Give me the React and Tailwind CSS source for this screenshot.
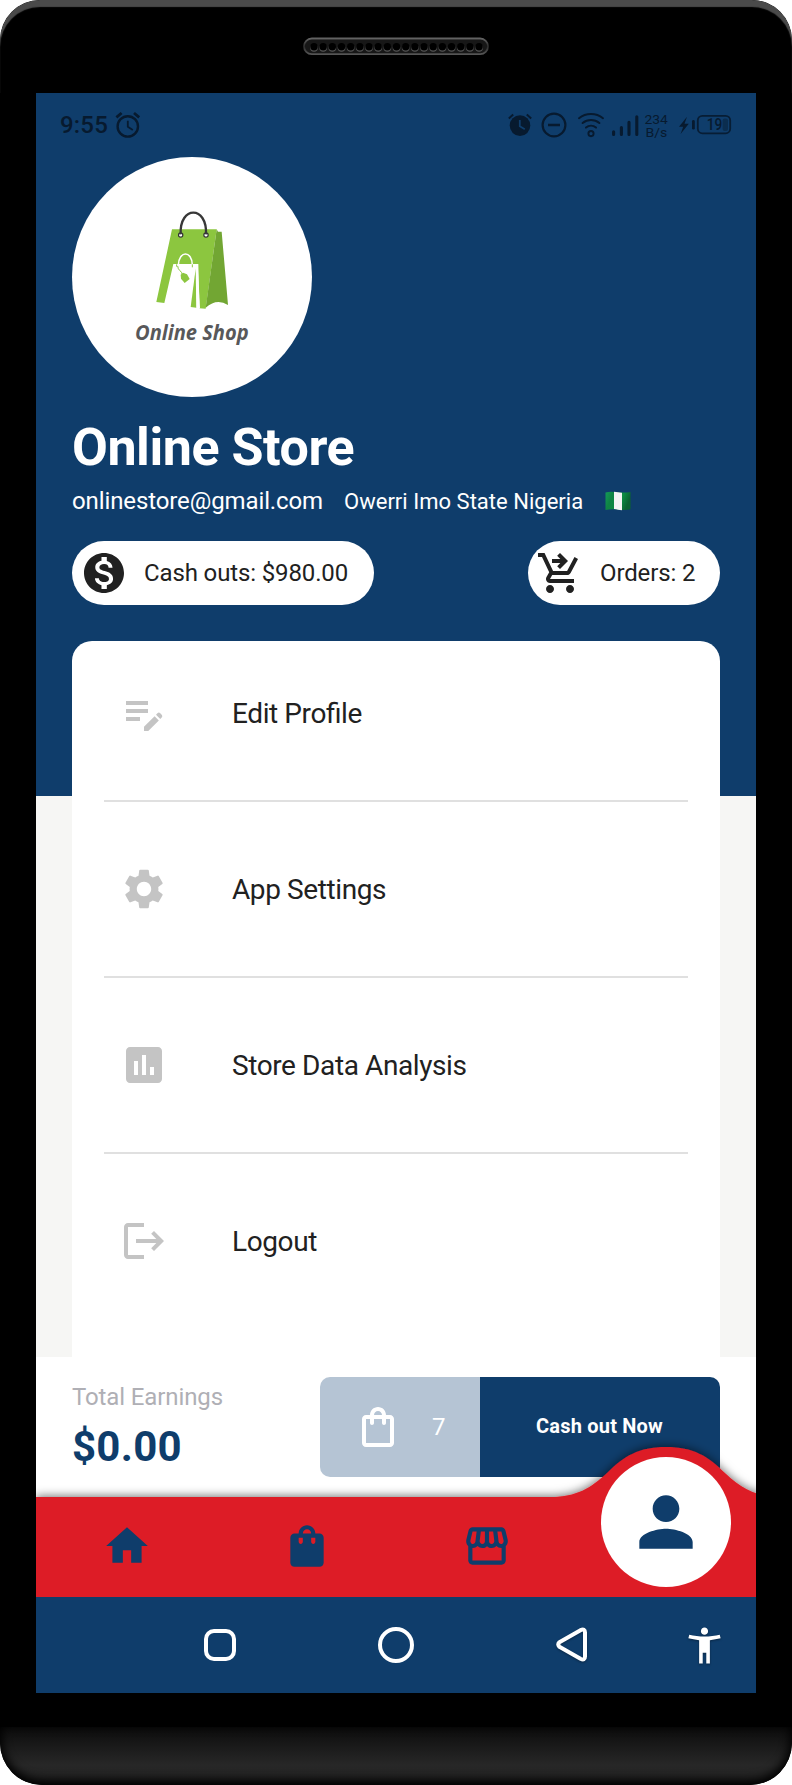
import {
  MdMonetizationOn,
  MdShoppingCartCheckout,
  MdEditNote,
  MdSettings,
  MdAssessment,
  MdOutlineShoppingBag,
  MdShoppingBag,
  MdHome,
  MdOutlineStorefront,
  MdPerson,
  MdAccessibilityNew,
} from "react-icons/md";

function LogoutIcon({ className }) {
  return (
    <svg viewBox="0 0 24 24" fill="currentColor" className={className}>
      <path d="M17 7l-1.41 1.41L18.17 11H8v2h10.17l-2.58 2.58L17 17l5-5M4 5h8V3H4c-1.1 0-2 .9-2 2v14c0 1.1.9 2 2 2h8v-2H4V5z" />
    </svg>
  );
}

function Speaker() {
  return (
    <svg viewBox="0 0 186 18" className="mt-[37px] h-[18px] w-[186px]">
      <defs>
        <linearGradient id="rim" x1="0" y1="0" x2="0" y2="1">
          <stop offset="0" stopColor="#626262" />
          <stop offset="0.5" stopColor="#2c2c2c" />
          <stop offset="1" stopColor="#555" />
        </linearGradient>
      </defs>
      <rect x="1" y="1.5" width="184" height="15.6" rx="7.8" fill="#171717" stroke="url(#rim)" strokeWidth="1.8" />
      {Array.from({ length: 19 }, (_, i) => (
        <g key={i}>
          <circle cx={11 + i * 9.17} cy="10.9" r="3.8" fill="#555" />
          <circle cx={11 + i * 9.17} cy="9.8" r="3.7" fill="#000" />
        </g>
      ))}
    </svg>
  );
}

function StatusBar() {
  return (
    <div className="flex h-16 shrink-0 items-center text-[#071a2f]">
      <span className="ml-6 w-[48px] text-[24px] leading-none font-medium tracking-[0.2px]">9:55</span>
      <svg viewBox="0 0 26 28" className="ml-[7px] h-7 w-[26px]" fill="none" stroke="currentColor" strokeWidth="2.4">
        <circle cx="12.8" cy="15.4" r="10.2" />
        <path d="M12.8 9.8v6l5 3.2" strokeWidth="1.8" />
        <path d="M1.4 6.3L6.6 2M24.2 6.3L19 2" strokeWidth="2.8" />
      </svg>
      <svg viewBox="505 111 230 28" className="ml-[364px] h-7 w-[230px]" fill="none" stroke="currentColor">
        <circle cx="520" cy="125.6" r="10.3" fill="currentColor" stroke="none" />
        <path d="M519.8 120v6.2l5 3" stroke="#0f3d6b" strokeWidth="1.8" />
        <path d="M508.8 118.6l4.4-4M531.2 118.6l-4.4-4" strokeWidth="2" />
        <circle cx="554" cy="125" r="11.4" strokeWidth="2.2" />
        <path d="M548 125h12" strokeWidth="2.4" />
        <g strokeWidth="2" strokeLinecap="round">
          <path d="M579 118.2a19 19 0 0 1 24 0" />
          <path d="M582.6 123a13 13 0 0 1 16.8 0" />
          <path d="M586 127.6a7.8 7.8 0 0 1 10 0" />
        </g>
        <circle cx="591" cy="133.6" r="2.6" strokeWidth="1.9" />
        <g strokeWidth="3.1" strokeLinecap="round">
          <path d="M613.6 131.8v2.7M621.4 127.6v6.9M629 122.2v12.3M636.8 116.8v17.7" />
        </g>
        <path d="M687 116.8l-8 10h4.2l-2.6 7.2 8.2-10.2h-4.3z" fill="currentColor" stroke="none" />
        <path d="M693.4 121.4v6.8" strokeWidth="2.8" strokeLinecap="round" />
        <rect x="697.8" y="115.9" width="32.4" height="17.4" rx="4.6" strokeWidth="1.8" opacity="0.9" />
        <rect x="722.6" y="118.4" width="5.4" height="12.6" rx="2" fill="currentColor" stroke="none" opacity="0.45" />
        <g fill="currentColor" stroke="none" fontFamily="Roboto, sans-serif">
          <text x="644.4" y="124.2" fontSize="13.6" textLength="23.4" lengthAdjust="spacingAndGlyphs">234</text>
          <text x="645.4" y="137.2" fontSize="13.6" textLength="21.8" lengthAdjust="spacingAndGlyphs">B/s</text>
          <text x="706.8" y="130.2" fontSize="16" fontWeight="500" textLength="15.5" lengthAdjust="spacingAndGlyphs">19</text>
        </g>
      </svg>
    </div>
  );
}

function Avatar() {
  return (
    <svg viewBox="36 21 720 720" className="ml-9 size-60 shrink-0">
      <circle cx="396" cy="381" r="360" fill="#fff" />
      <path d="M336 238H470L437 476L418 475L415 342H340L313 459L289 456Z" fill="#8cc63f" />
      <path d="M470 238L474 245H485L504 465Q470 444 437 473Z" fill="#72a633" />
      <path d="M407 356L392 471L409 473Z" fill="#8cc63f" />
      <path d="M413 342L420 475L410 473L408 350Z" fill="#fff" />
      <path d="M355 350V345C357 301 396 301 397 345V350" fill="none" stroke="#fff" strokeWidth="4.5" />
      <path d="M350 343v7M397 343v9" stroke="#8cc63f" strokeWidth="3" />
      <path d="M353 348C353 362 366 362 367 374" fill="none" stroke="#8cc63f" strokeWidth="3" />
      <path d="M362 374L369 368L381 373L389 387L374 399L363 386Z" fill="#8cc63f" />
      <circle cx="362" cy="255" r="6.5" fill="#fff" stroke="#333" strokeWidth="3.5" />
      <circle cx="438" cy="255" r="6.5" fill="#fff" stroke="#333" strokeWidth="3.5" />
      <path d="M362 253C358 166 442 166 438 253" fill="none" stroke="#383838" strokeWidth="7" />
      <text
        x="225"
        y="571"
        fontFamily="'Open Sans', sans-serif"
        fontSize="63"
        fontWeight="700"
        fontStyle="italic"
        fill="#58585a"
        textLength="341"
        lengthAdjust="spacingAndGlyphs"
      >
        Online Shop
      </text>
    </svg>
  );
}

function Flag() {
  return (
    <svg viewBox="0 0 26 20" className="ml-[22px] h-5 w-[26px]">
      <defs>
        <linearGradient id="wave" x1="0" y1="0" x2="1" y2="0.3">
          <stop offset="0" stopColor="#149a58" />
          <stop offset="0.3" stopColor="#0f8444" />
          <stop offset="0.7" stopColor="#0b8c42" />
          <stop offset="1" stopColor="#0a6230" />
        </linearGradient>
      </defs>
      <path d="M0.5 1.5C8 -0.8 15 3 25.5 1V18.3C17 20.4 10 16.8 0.5 19Z" fill="url(#wave)" />
      <path d="M9 0.7C12 0.9 14 1.6 17 1.7V19.3C14 19.1 12 18.2 9 18Z" fill="#f4f4f4" />
    </svg>
  );
}

const menu = [
  { label: "Edit Profile", Icon: MdEditNote },
  { label: "App Settings", Icon: MdSettings },
  { label: "Store Data Analysis", Icon: MdAssessment },
  { label: "Logout", Icon: LogoutIcon },
];

function Profile() {
  return (
    <div className="flex h-[1264px] flex-col overflow-hidden bg-[linear-gradient(#0f3d6b_703px,#f6f6f4_703px)]">
      <StatusBar />
      <Avatar />
      <div className="mt-[21px] h-[60px] pl-9 text-[52px] leading-[60px] font-bold tracking-[-0.45px] whitespace-nowrap text-white">
        Online Store
      </div>
      <div className="mt-[7px] flex h-8 items-center pl-9 whitespace-nowrap text-white">
        <span className="w-[272px] text-[24px] tracking-[-0.11px]">onlinestore@gmail.com</span>
        <span className="text-[22px] tracking-[0.02px]">Owerri Imo State Nigeria</span>
        <Flag />
      </div>
      <div className="mt-6 flex h-16 shrink-0 justify-between px-9 text-[24px] tracking-[-0.13px] text-[#212121]">
        <div className="flex w-[302px] items-center rounded-full bg-white pl-2">
          <MdMonetizationOn className="size-12" />
          <span className="ml-4 whitespace-nowrap">Cash outs: $980.00</span>
        </div>
        <div className="flex w-48 items-center rounded-full bg-white pl-2">
          <MdShoppingCartCheckout className="size-12" />
          <span className="ml-4 whitespace-nowrap">Orders: 2</span>
        </div>
      </div>
      <div className="mx-9 mt-9 flex grow flex-col rounded-t-[20px] bg-white px-8">
        {menu.map(({ label, Icon }, i) => (
          <div
            key={label}
            className={
              i === 0
                ? "flex h-[161px] items-center border-b-2 border-[#e0e0e0] pb-[15px]"
                : i === 3
                  ? "flex h-[174px] items-center"
                  : "flex h-[176px] items-center border-b-2 border-[#e0e0e0]"
            }
          >
            <Icon className="ml-4 size-12 text-[#c4c4c4]" />
            <span className="ml-16 pt-[2px] text-[28px] tracking-[-0.4px] text-[#212121] [font-feature-settings:'liga'_1]">
              {label}
            </span>
          </div>
        ))}
      </div>
    </div>
  );
}

function Earnings() {
  return (
    <div className="flex h-[140px] justify-between bg-white px-9 pt-5">
      <div>
        <div className="h-10 text-[24px] leading-10 tracking-[-0.12px] text-[#afafb5]">Total Earnings</div>
        <div className="mt-[2px] text-[42px] leading-[56px] font-bold tracking-[0.25px] text-[#0f3d6b]">$0.00</div>
      </div>
      <div className="flex h-[100px] w-[400px] overflow-hidden rounded-[10px]">
        <div className="flex w-40 items-center bg-[#b5c4d4] pl-[34px] text-white">
          <MdOutlineShoppingBag className="size-12" />
          <span className="ml-[30px] text-[24px]">7</span>
        </div>
        <div className="flex grow items-center justify-center bg-[#0f3d6b] pr-px pb-[2px] text-[20px] font-bold tracking-[0.2px] text-white">
          Cash out Now
        </div>
      </div>
    </div>
  );
}

function BottomNav() {
  return (
    <div className="relative flex h-[100px] items-center bg-[#dd1d26] pb-[2px] text-[#0f3d6b]">
      <svg viewBox="0 0 720 165" className="absolute -top-[65px] left-0 h-[165px] w-[720px] overflow-hidden">
        <defs>
          <filter id="lift" x="-10%" y="-30%" width="120%" height="160%">
            <feDropShadow dx="0" dy="-1" stdDeviation="5" floodColor="#000" floodOpacity="0.55" />
          </filter>
        </defs>
        <path
          d="M0 65H515C540 65 555 56 571 41C588 24 603 15 630 15C657 15 672 24 689 41C705 56 720 65 745 65V165H0Z"
          fill="#dd1d26"
          filter="url(#lift)"
        />
      </svg>
      <div className="relative flex grow items-center">
        <div className="flex w-[182px] justify-center"><MdHome className="size-[50px]" /></div>
        <div className="flex w-[178px] justify-center"><MdShoppingBag className="size-[50px]" /></div>
        <div className="flex w-[182px] justify-center"><MdOutlineStorefront className="size-[50px]" /></div>
      </div>
      <div className="absolute -top-10 left-[565px] flex size-[130px] items-center justify-center rounded-full bg-white">
        <MdPerson className="size-20" />
      </div>
    </div>
  );
}

function SystemNav() {
  return (
    <div className="flex h-24 items-center bg-[#0f3d6b] text-white [&_svg]:drop-shadow-[0_1px_1px_rgba(0,0,0,0.35)]">
      <div className="ml-[168px] size-8 rounded-[10px] border-4 border-white" />
      <div className="ml-[142px] size-9 rounded-full border-4 border-white" />
      <svg viewBox="0 0 32 36" className="ml-[142px] h-9 w-8" fill="none" stroke="currentColor" strokeWidth="4" strokeLinejoin="round">
        <path d="M3.4 15.2L24.5 3.2Q29 1.2 29 5.6V29.4Q29 33.9 24.5 31.8L3.4 19.8Q1.2 17.5 3.4 15.2Z" />
      </svg>
      <MdAccessibilityNew className="ml-[94.5px] size-[43px]" />
    </div>
  );
}

export default function App() {
  return (
    <div className="h-[1785px] w-[792px] bg-white font-['Roboto',sans-serif]">
      <div className="flex h-[1785px] flex-col overflow-hidden rounded-t-[40px] rounded-b-[42px] bg-black">
        <div className="flex h-[93px] shrink-0 justify-center rounded-t-[40px] shadow-[inset_0_7px_1px_0_#4a4a4a]">
          <Speaker />
        </div>
        <div className="mx-9 flex h-[1600px] shrink-0 flex-col overflow-hidden">
          <Profile />
          <Earnings />
          <BottomNav />
          <SystemNav />
        </div>
        <div className="mt-[34px] grow rounded-b-[42px] bg-[linear-gradient(#0c0c0c,#272727_65%,#222)] shadow-[inset_0_-3px_10px_2px_#000]" />
      </div>
    </div>
  );
}
